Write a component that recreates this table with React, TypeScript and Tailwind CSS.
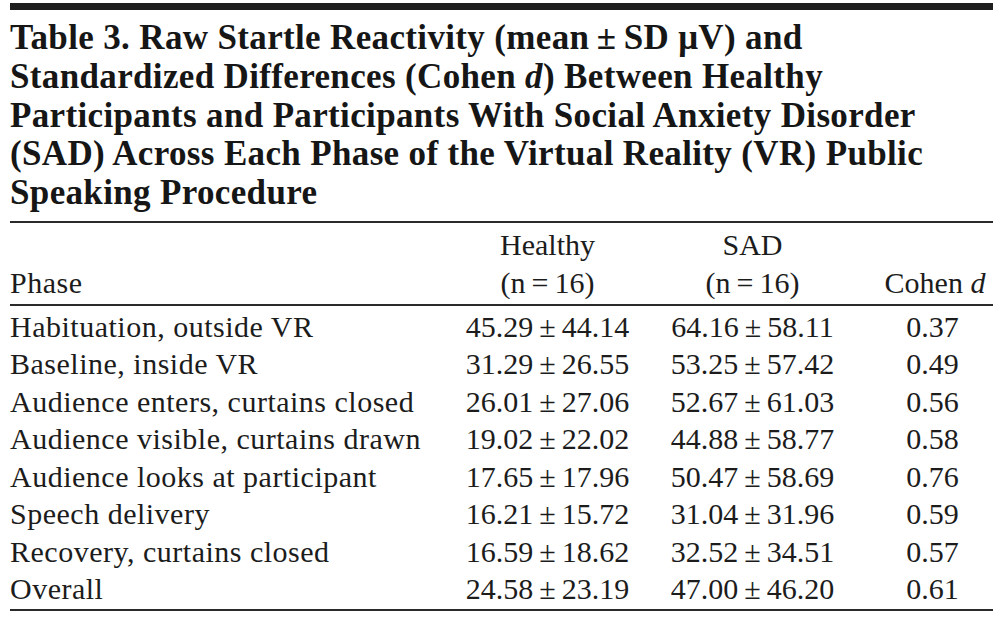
import React from 'react';

// Table 3 – startle reactivity, healthy vs SAD

interface Row {
  phase: string;
  healthy: [string, string];
  sad: [string, string];
  d: string;
}

const rows: Row[] = [
  { phase: 'Habituation, outside VR', healthy: ['45.29', '44.14'], sad: ['64.16', '58.11'], d: '0.37' },
  { phase: 'Baseline, inside VR', healthy: ['31.29', '26.55'], sad: ['53.25', '57.42'], d: '0.49' },
  { phase: 'Audience enters, curtains closed', healthy: ['26.01', '27.06'], sad: ['52.67', '61.03'], d: '0.56' },
  { phase: 'Audience visible, curtains drawn', healthy: ['19.02', '22.02'], sad: ['44.88', '58.77'], d: '0.58' },
  { phase: 'Audience looks at participant', healthy: ['17.65', '17.96'], sad: ['50.47', '58.69'], d: '0.76' },
  { phase: 'Speech delivery', healthy: ['16.21', '15.72'], sad: ['31.04', '31.96'], d: '0.59' },
  { phase: 'Recovery, curtains closed', healthy: ['16.59', '18.62'], sad: ['32.52', '34.51'], d: '0.57' },
  { phase: 'Overall', healthy: ['24.58', '23.19'], sad: ['47.00', '46.20'], d: '0.61' },
];

const T = '\u2009';

function MeanSd({ v }: { v: [string, string] }) {
  return (
    <span className="whitespace-nowrap">
      {v[0]}
      {T}±{T}
      {v[1]}
    </span>
  );
}

export default function App() {
  return (
    <div className="min-h-screen bg-white text-[#1c1c1c] font-['Liberation_Serif','Times_New_Roman',serif]">
      <div className="ml-[10px] w-[983px] pt-[3px]">
        {/* heavy top bar */}
        <div className="h-[7px] bg-[#1e1e1e]" />

        {/* caption */}
        <h1 className="mt-[9px] text-[35px] leading-[38.75px] font-bold tracking-[0.35px] text-[#161616] whitespace-nowrap">
          <span className="block">Table 3. Raw Startle Reactivity (mean{T}±{T}SD μV) and</span>
          <span className="block">
            Standardized Differences (Cohen <i>d</i>) Between Healthy
          </span>
          <span className="block">Participants and Participants With Social Anxiety Disorder</span>
          <span className="block">(SAD) Across Each Phase of the Virtual Reality (VR) Public</span>
          <span className="block">Speaking Procedure</span>
        </h1>

        <div className="mt-[8px] h-[2px] bg-[#2a2a2a]" />

        {/* column heads */}
        <div className="grid grid-cols-[447px_181px_229px_1fr] items-end pt-[3px] pb-[2px] text-[30px] leading-[38px]">
          <div className="tracking-[0.5px]">Phase</div>
          <div className="text-center">
            <div>Healthy</div>
            <div>(n{T}={T}16)</div>
          </div>
          <div className="text-center">
            <div>SAD</div>
            <div>(n{T}={T}16)</div>
          </div>
          <div className="text-center pl-[10px]">
            Cohen <i>d</i>
          </div>
        </div>

        <div className="h-[2px] bg-[#2a2a2a]" />

        {/* body */}
        <div className="pt-[2px] text-[30px] leading-[37.5px]">
          {rows.map(r => (
            <div key={r.phase} className="grid grid-cols-[447px_181px_229px_1fr]">
              <div className="tracking-[0.5px] whitespace-nowrap">{r.phase}</div>
              <div className="text-center">
                <MeanSd v={r.healthy} />
              </div>
              <div className="text-center">
                <MeanSd v={r.sad} />
              </div>
              <div className="text-center pl-[5px]">{r.d}</div>
            </div>
          ))}
        </div>

        <div className="mt-[1px] h-[2px] bg-[#2a2a2a]" />
      </div>
    </div>
  );
}
